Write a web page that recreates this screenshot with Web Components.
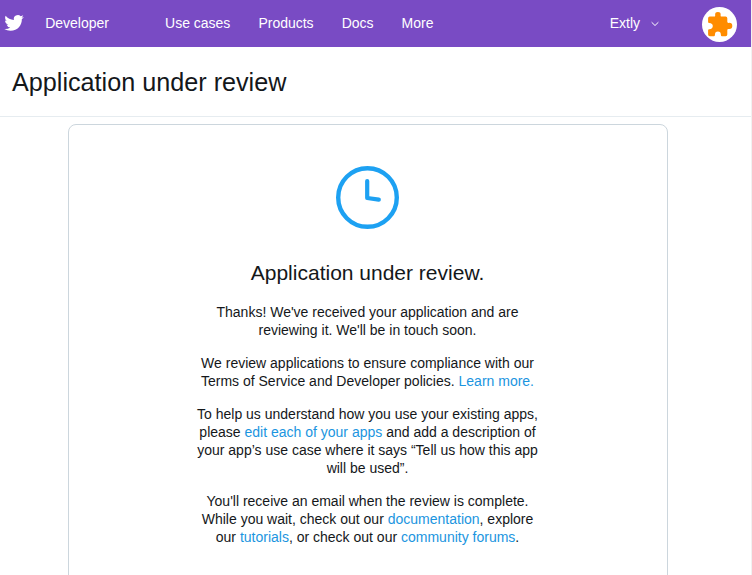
<!DOCTYPE html>
<html lang="en">
<head>
<meta charset="utf-8">
<title>Application under review</title>
<style>
body { margin: 0; background: #fff; height: 575px; overflow: hidden; font: 14px/18px "Liberation Sans", Arial, sans-serif; color: #14171a; }
</style>
</head>
<body>
<review-page></review-page>
<script>
const define = (name, markup) => {
  const template = document.createElement('template');
  template.innerHTML = markup;
  customElements.define(name, class extends HTMLElement {
    constructor() {
      super();
      this.attachShadow({ mode: 'open' }).append(template.content.cloneNode(true));
    }
  });
};

define('bird-logo', `
<style>:host{display:block;width:20px;height:20px} svg{display:block}</style>
<svg width="20" height="20" viewBox="-0.4 -0.2 24.6 24.6" fill="#fff"><path d="M23.954 4.569a10 10 0 0 1-2.825.775 4.958 4.958 0 0 0 2.163-2.723 9.99 9.99 0 0 1-3.127 1.184 4.92 4.92 0 0 0-8.384 4.482C7.691 8.094 4.066 6.13 1.64 3.161a4.822 4.822 0 0 0-.666 2.475c0 1.71.87 3.213 2.188 4.096a4.904 4.904 0 0 1-2.228-.616v.061a4.923 4.923 0 0 0 3.946 4.827 4.996 4.996 0 0 1-2.212.085 4.937 4.937 0 0 0 4.604 3.417 9.868 9.868 0 0 1-6.102 2.105c-.39 0-.779-.023-1.17-.067a13.995 13.995 0 0 0 7.557 2.209c9.054 0 13.999-7.496 13.999-13.986 0-.209 0-.42-.015-.63a9.936 9.936 0 0 0 2.46-2.548z"/></svg>`);

define('user-avatar', `
<style>:host{display:block;width:35px;height:35px;border-radius:50%;background:#fff} svg{display:block;width:35px;height:35px}</style>
<svg viewBox="0 0 35 35"><path fill="#ff8c00" d="M7.8 9.6H12.2Q13.2 9.6 13.2 8.4Q12.6 5 15.9 5Q19.2 5 18.6 8.4Q18.6 9.6 19.6 9.6H23.6Q25.3 9.6 25.3 11.3V14.8Q25.3 16 26.6 15.9Q30.3 15.5 30.3 18.9Q30.3 22.3 26.6 21.9Q25.3 21.8 25.3 23V27.5Q25.3 29.2 23.6 29.2H19.9Q18.9 29.2 18.9 28Q18.9 24.6 15.9 24.6Q12.9 24.6 12.9 28Q12.9 29.2 11.9 29.2H7.8Q6.1 29.2 6.1 27.5V23.2Q6.1 22.3 7.2 22.3Q10.8 22.1 10.8 19.1Q10.8 16.1 7.2 15.9Q6.1 15.9 6.1 15V11.3Q6.1 9.6 7.8 9.6Z"/></svg>`);

define('nav-item', `
<style>:host{display:block;color:#fff;white-space:nowrap}</style><slot></slot>`);

define('top-bar', `
<style>
:host{display:flex;align-items:center;height:47px;box-sizing:border-box;padding:0 14px 0 4px;background:#794bc4}
nav{display:flex;gap:28px;margin-left:56px}
nav-item{margin-top:-1px}
bird-logo{margin-top:-2px}
.brand{margin-left:21.2px}
.user{display:flex;align-items:center;gap:10px;margin-left:auto}
.user svg{display:block}
user-avatar{margin:2px 0 0 42px}
</style>
<bird-logo></bird-logo>
<nav-item class="brand">Developer</nav-item>
<nav><nav-item>Use cases</nav-item><nav-item>Products</nav-item><nav-item>Docs</nav-item><nav-item>More</nav-item></nav>
<div class="user"><nav-item>Extly</nav-item><svg width="10" height="6" viewBox="0 0 10 6" fill="none" stroke="#fff" stroke-linecap="round"><path d="M1.9 1.5 5 4.5 8.1 1.5"/></svg></div>
<user-avatar></user-avatar>`);

define('page-title', `
<style>
:host{display:block;height:70px;box-sizing:border-box;padding:19px 12px 0;border-bottom:1px solid #e6ecf0}
h1{margin:0;font-weight:400;font-size:25.2px;line-height:32px}
</style><h1><slot></slot></h1>`);

define('clock-icon', `
<style>:host{display:block;width:63px;height:63px} svg{display:block}</style>
<svg width="63" height="63" viewBox="0 0 63 63" fill="none" stroke="#1da1f2" stroke-linecap="round" stroke-linejoin="round"><circle cx="31.5" cy="31.5" r="29.3" stroke-width="4.4"/><path stroke-width="4.2" d="M31.2 15v17l11.6 1.6"/></svg>`);

define('text-link', `
<style>:host{color:#1b95e0}</style><slot></slot>`);

define('review-card', `
<style>
:host{display:flex;flex-direction:column;align-items:center;box-sizing:border-box;width:600px;height:600px;margin:7px 0 0 68px;padding:41px 1px 0 0;border:1px solid #ccd6dd;border-radius:8px;text-align:center}
h2{margin:31px 0 17px;font-weight:400;font-size:21px;line-height:26px}
::slotted(p){width:350px;margin:0 0 15px}
</style>
<clock-icon></clock-icon>
<h2><slot name="heading"></slot></h2>
<slot></slot>`);

define('review-page', `
<style>
:host{display:block;box-sizing:border-box;width:752px;height:575px;overflow:hidden;border-right:1px solid #f1f1f1}
p{white-space:nowrap}
</style>
<top-bar></top-bar>
<page-title>Application under review</page-title>
<review-card>
<span slot="heading">Application under review.</span>
<p>Thanks! We've received your application and are<br>reviewing it. We'll be in touch soon.</p>
<p>We review applications to ensure compliance with our<br>Terms of Service and Developer policies. <text-link>Learn more.</text-link></p>
<p>To help us understand how you use your existing apps,<br>please <text-link>edit each of your apps</text-link> and add a description of<br>your app’s use case where it says “Tell us how this app<br>will be used”.</p>
<p>You'll receive an email when the review is complete.<br>While you wait, check out our <text-link>documentation</text-link>, explore<br>our <text-link>tutorials</text-link>, or check out our <text-link>community forums</text-link>.</p>
</review-card>`);
</script>
</body>
</html>
